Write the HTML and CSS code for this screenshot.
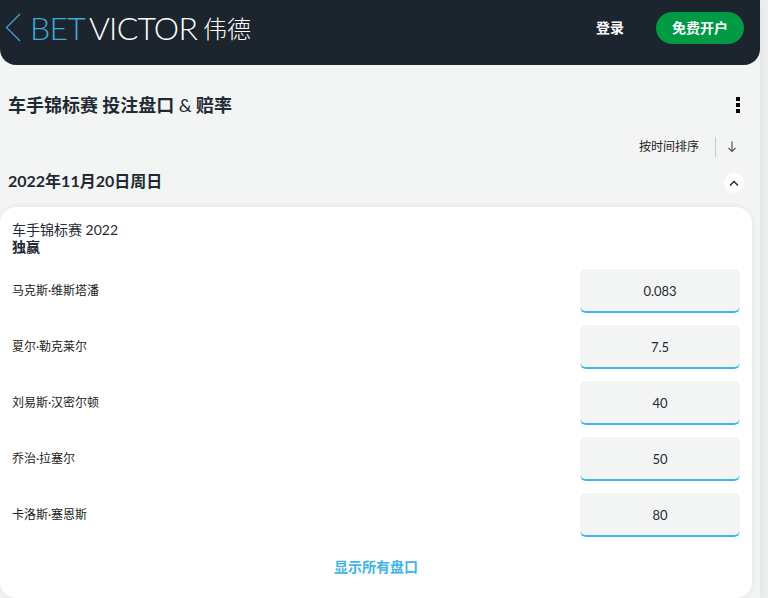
FILE: index.html
```html
<!DOCTYPE html>
<html lang="zh-CN">
<head>
<meta charset="utf-8">
<title>车手锦标赛 投注盘口 &amp; 赔率</title>
<link rel="stylesheet" href="styles.css">
</head>
<body>
<div class="page">
  <header class="topbar">
    <div class="brand">
      <svg class="brand-chevron" width="16" height="30" viewBox="0 0 16 30" aria-hidden="true"><path d="M15 1 1.500 14.500 15 28" fill="none" stroke="#3fa9d8" stroke-width="1.200"/></svg>
      <span class="brand-bet">BET</span><span class="brand-victor">VICTOR</span><span class="brand-cn">伟德</span>
    </div>
    <nav class="auth">
      <a class="login">登录</a>
      <a class="signup">免费开户</a>
    </nav>
  </header>

  <main class="content">
    <div class="title-row">
      <h1 class="title">车手锦标赛 投注盘口 <span class="amp">&amp;</span> 赔率</h1>
      <svg class="kebab" width="6" height="16" viewBox="0 0 6 16" aria-hidden="true"><path d="M1 0h4v4H1zM1 6h4v4H1zM1 12h4v4H1z" fill="#000"/></svg>
    </div>
    <div class="sort-row">
      <span class="sort-label">按时间排序</span>
      <span class="sort-btn">
        <svg width="10" height="12" viewBox="0 0 10 12" aria-hidden="true"><path d="M5 .5v10M1.500 7 5 10.500 8.500 7" fill="none" stroke="#555" stroke-width="1.200"/></svg>
      </span>
    </div>
    <div class="date-row">
      <h2 class="date">2022年11月20日周日</h2>
      <span class="collapse">
        <svg width="10" height="6" viewBox="0 0 10 6" aria-hidden="true"><path d="M1 5.500 5 1.500l4 4" fill="none" stroke="#222" stroke-width="1.300"/></svg>
      </span>
    </div>
    <section class="card">
      <div class="card-head">
        <div class="event">车手锦标赛 2022</div>
        <div class="market">独赢</div>
      </div>
      <div class="runners">
        <div class="runner"><span class="name">马克斯·维斯塔潘</span><button class="odds">0.083</button></div>
        <div class="runner"><span class="name">夏尔·勒克莱尔</span><button class="odds">7.5</button></div>
        <div class="runner"><span class="name">刘易斯·汉密尔顿</span><button class="odds">40</button></div>
        <div class="runner"><span class="name">乔治·拉塞尔</span><button class="odds">50</button></div>
        <div class="runner"><span class="name">卡洛斯·塞恩斯</span><button class="odds">80</button></div>
      </div>
      <a class="show-all">显示所有盘口</a>
    </section>
  </main>
</div>
</body>
</html>
```

FILE: styles.css
```css
* { box-sizing: border-box; }
html, body { margin: 0; padding: 0; height: 100%; overflow: hidden; }
body {
  background: #eeefef;
  font-family: Lato, "Noto Sans CJK SC", sans-serif;
  color: #1f2a33;
}
.page {
  width: 760px;
  height: 598px;
  background: #f3f5f5;
  box-shadow: 4px 0 6px rgba(0,0,0,.03);
}
.topbar {
  height: 65px;
  background: #1c252e;
  border-radius: 0 0 16px 16px;
  display: flex;
  align-items: flex-start;
  justify-content: space-between;
  padding: 12px 16px 0 5px;
}
.brand { display: flex; align-items: center; height: 32px; }
.brand-chevron { margin-right: 9px; flex: none; }
.brand-bet, .brand-victor {
  font-family: Lato, sans-serif;
  font-weight: 300;
  font-size: 32px;
  letter-spacing: -.8px;
  line-height: 32px;
}
.brand-bet { color: #3fa9d8; margin-right: 4px; }
.brand-victor { color: #fff; }
.brand-cn {
  color: #fff;
  font-family: "Noto Sans CJK SC", sans-serif;
  font-weight: 300;
  font-size: 24px;
  margin-left: 6px;
  line-height: 32px;
}
.auth { display: flex; align-items: center; gap: 32px; height: 32px; }
.login { color: #fff; font-weight: 700; font-size: 14px; padding-bottom: 2px; }
.signup {
  width: 88px;
  height: 32px;
  border-radius: 16px;
  background: #009a44;
  color: #fff;
  font-weight: 700;
  font-size: 14px;
  display: flex;
  align-items: center;
  justify-content: center;
  padding-bottom: 2px;
}
.content { padding: 0 8px 0 0; }
.title-row {
  height: 80px;
  display: flex;
  align-items: center;
  justify-content: space-between;
  padding: 0 11px 0 8px;
}
.title { margin: 0; font-size: 18px; font-weight: 700; color: #1f2a33; line-height: 24px; }
.amp { font-weight: 400; }
.sort-row {
  display: flex;
  justify-content: flex-end;
  align-items: center;
  height: 20px;
  margin-top: -8px;
  padding-right: 15px;
}
.sort-label { font-size: 12px; color: #222; padding-right: 16px; padding-bottom: 4px; }
.sort-btn {
  width: 22px;
  height: 20px;
  border-left: 1px solid #c9cccc;
  display: flex;
  align-items: center;
  justify-content: flex-end;
  padding-right: 0;
}
.date-row {
  height: 24px;
  margin-top: 14px;
  display: flex;
  align-items: center;
  justify-content: space-between;
  padding: 0 8px;
}
.date { margin: 0; font-size: 16px; font-weight: 700; color: #1f2a33; padding-bottom: 7px; }
.collapse {
  width: 20px;
  height: 20px;
  border-radius: 50%;
  background: #fff;
  display: flex;
  align-items: center;
  justify-content: center;
}
.card {
  margin-top: 12px;
  background: #fff;
  border-radius: 16px;
  height: 391px;
  padding: 15px 12px 0;
  box-shadow: 0 0 6px rgba(0,0,0,.08);
  width: 752px;
}
.card-head { line-height: 16px; height: 34px; }
.event { font-size: 14px; }
.market { font-size: 14px; font-weight: 700; margin-top: 1px; }
.runners { margin-top: 13px; display: flex; flex-direction: column; gap: 12px; }
.runner { display: flex; justify-content: space-between; align-items: center; height: 44px; }
.name { font-size: 12px; color: #222; padding-bottom: 4px; }
.odds {
  width: 160px;
  height: 44px;
  border: 0;
  border-bottom: 2px solid #3fb4e5;
  border-radius: 6px;
  background: #f3f5f5;
  color: #1f2a33;
  font-family: Lato, sans-serif;
  font-size: 13px;
  padding: 1px 0 0;
}
.show-all {
  display: block;
  margin-top: 21px;
  text-align: center;
  color: #3fb4e5;
  font-size: 14px;
  font-weight: 700;
  line-height: 18px;
}
```
